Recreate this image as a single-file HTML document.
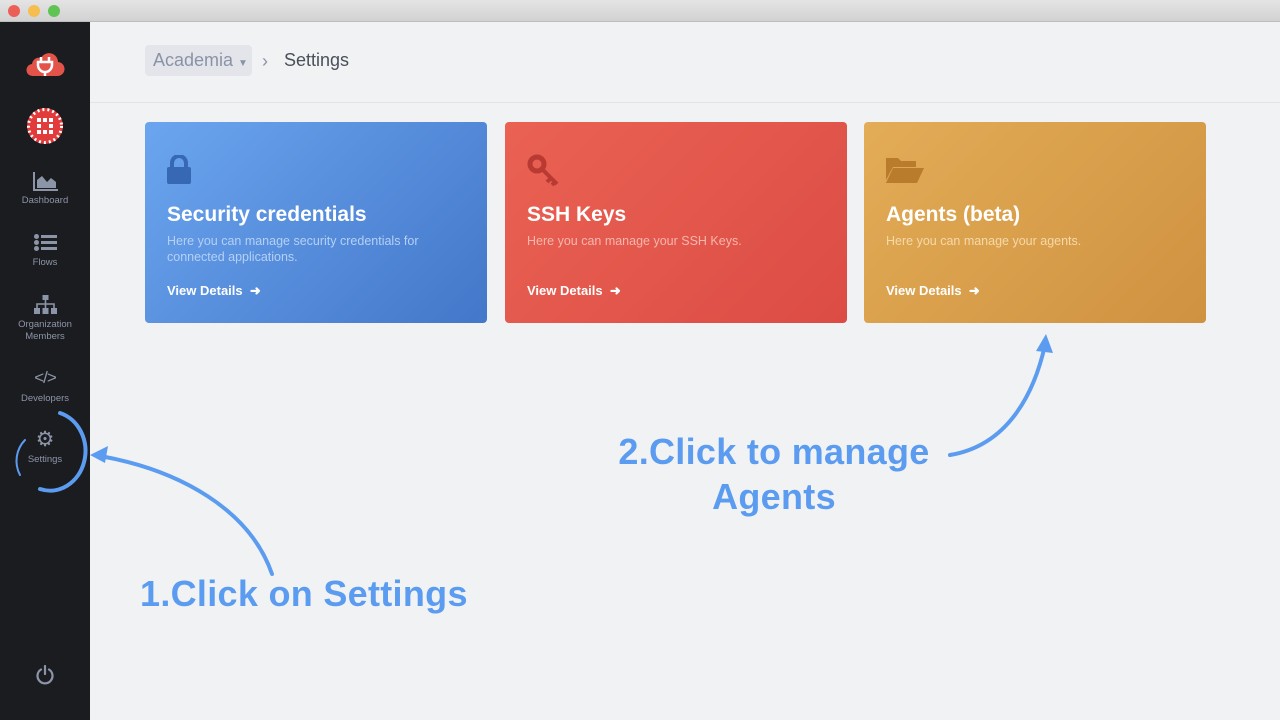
<!DOCTYPE html>
<html><head><meta charset="utf-8"><style>
*{margin:0;padding:0;box-sizing:border-box}
body{width:1280px;height:720px;overflow:hidden;background:#f1f2f4;font-family:"Liberation Sans",sans-serif;position:relative}
.tb{position:absolute;left:0;top:0;width:1280px;height:22px;background:linear-gradient(#e4e4e4,#d2d2d2);border-bottom:1px solid #bdbdbd}
.dot{position:absolute;top:5px;width:12px;height:12px;border-radius:50%}
.sb{position:absolute;left:0;top:22px;width:90px;height:698px;background:#1b1c1f}
.it{position:absolute;left:0;width:90px;text-align:center;color:#8c95a8;font-size:9.5px;line-height:12px}
.hdr{position:absolute;left:90px;top:22px;width:1190px;height:81px;border-bottom:1px solid #e1e3e6}
.crumb{position:absolute;left:145px;top:45px;width:107px;height:31px;background:#e3e5ea;border-radius:4px;color:#8a93a6;font-size:18px;line-height:31px;padding-left:8px}
.card{position:absolute;top:122px;width:342px;height:201px;border-radius:4px;color:#fff;padding:0 22px}
.ttl{position:absolute;left:22px;top:81px;font-size:21px;font-weight:bold}
.dsc{position:absolute;left:22px;top:111px;font-size:12.5px;line-height:16px;width:290px}
.vd{position:absolute;left:22px;top:161px;font-size:13px;font-weight:bold}
.ann{position:absolute;color:#5b9cf0;font-weight:bold;font-size:36px;text-align:center;line-height:45px;letter-spacing:0.3px}
</style></head><body>
<div class="tb"><div class="dot" style="left:8px;background:#ec5f57"></div><div class="dot" style="left:28px;background:#f5be4f"></div><div class="dot" style="left:48px;background:#5fc454"></div></div>
<div class="sb"></div>
<svg style="position:absolute;left:25px;top:48px" width="40" height="30" viewBox="0 0 40 30"><path d="M8 28h24a7 7 0 0 0 1-14 9 9 0 0 0-17-4 7 7 0 0 0-9 6 6 6 0 0 0 1 12z" fill="#e4534a"/><path d="M16 9v5M24 9v5M13 14h14v3a7 7 0 0 1-14 0zM20 23v5" stroke="#fff" stroke-width="2.5" fill="none"/></svg>
<svg style="position:absolute;left:27px;top:108px" width="36" height="36" viewBox="0 0 36 36"><circle cx="18" cy="18" r="18" fill="#e23b3b"/><circle cx="18" cy="18" r="16.5" fill="none" stroke="#fff" stroke-width="3" stroke-dasharray="2 3"/><g fill="#fff"><rect x="10" y="10" width="4" height="4"/><rect x="16" y="10" width="4" height="4"/><rect x="22" y="10" width="4" height="4"/><rect x="10" y="16" width="4" height="4"/><rect x="22" y="16" width="4" height="4"/><rect x="10" y="22" width="4" height="4"/><rect x="16" y="22" width="4" height="4"/><rect x="22" y="22" width="4" height="4"/></g></svg>
<svg style="position:absolute;left:33px;top:172px" width="25" height="19" viewBox="0 0 25 19"><path d="M1 0v18h24" stroke="#8c95a8" stroke-width="2" fill="none"/><path d="M4 16V8l5-4 5 6 4-4 5 4v6z" fill="#8c95a8"/></svg>
<div class="it" style="top:195px">Dashboard</div>
<svg style="position:absolute;left:34px;top:234px" width="23" height="17" viewBox="0 0 23 17"><g fill="#8c95a8"><circle cx="2.5" cy="2.5" r="2.5"/><circle cx="2.5" cy="8.5" r="2.5"/><circle cx="2.5" cy="14.5" r="2.5"/><rect x="7" y="1" width="16" height="3"/><rect x="7" y="7" width="16" height="3"/><rect x="7" y="13" width="16" height="3"/></g></svg>
<div class="it" style="top:257px">Flows</div>
<svg style="position:absolute;left:34px;top:295px" width="23" height="19" viewBox="0 0 23 19"><g fill="#8c95a8"><rect x="8.5" y="0" width="6" height="5"/><rect x="0" y="13" width="6" height="6"/><rect x="8.5" y="13" width="6" height="6"/><rect x="17" y="13" width="6" height="6"/></g><path d="M11.5 5v8M3 13V9h17v4" stroke="#8c95a8" stroke-width="1.6" fill="none"/></svg>
<div class="it" style="top:319px">Organization<br>Members</div>
<div class="it" style="top:368px;font-size:17px;line-height:20px;letter-spacing:-1px">&lt;/&gt;</div>
<div class="it" style="top:393px">Developers</div>
<div class="it" style="top:428px;font-size:21px;line-height:24px">⚙</div>
<div class="it" style="top:454px">Settings</div>
<svg style="position:absolute;left:35px;top:665px" width="20" height="20" viewBox="0 0 20 20"><path d="M6 4.5a7.5 7.5 0 1 0 8 0M10 1v8" stroke="#8c95a8" stroke-width="2.2" fill="none" stroke-linecap="round"/></svg>
<div class="hdr"></div>
<div class="crumb">Academia <span style="font-size:10px">▼</span></div>
<div style="position:absolute;left:262px;top:51px;color:#8a93a6;font-size:18px">›</div>
<div style="position:absolute;left:284px;top:50px;color:#4a4f5a;font-size:18px">Settings</div>
<div class="card" style="left:145px;background:linear-gradient(135deg,#6ba5ef,#4377c9)">
<svg style="position:absolute;left:22px;top:33px" width="24" height="30" viewBox="0 0 24 30"><path d="M5 13V8a7 7 0 0 1 14 0v5" stroke="#3668b4" stroke-width="4" fill="none"/><rect x="0" y="12" width="24" height="17" rx="2" fill="#3668b4"/></svg>
<div class="ttl">Security credentials</div><div class="dsc" style="color:#b4d0f5">Here you can manage security credentials for connected applications.</div><div class="vd">View Details &nbsp;➜</div></div>
<div class="card" style="left:505px;background:linear-gradient(135deg,#ea6253,#dc4c45)">
<svg style="position:absolute;left:22px;top:32px" width="34" height="34" viewBox="0 0 34 34"><circle cx="10" cy="10" r="7" stroke="#b93a33" stroke-width="5" fill="none"/><path d="M15 15l15 15M24 24l-4 4M28 28l-3 3" stroke="#b93a33" stroke-width="4" fill="none"/></svg>
<div class="ttl">SSH Keys</div><div class="dsc" style="color:#f6b6ae">Here you can manage your SSH Keys.</div><div class="vd">View Details &nbsp;➜</div></div>
<div class="card" style="left:864px;background:linear-gradient(135deg,#e3ac57,#cf9240)">
<svg style="position:absolute;left:22px;top:34px" width="38" height="28" viewBox="0 0 38 28"><path d="M0 2h12l3 3h15v6H7L0 24z" fill="#b97b2c"/><path d="M7 12h31l-7 15H0z" fill="#b97b2c"/></svg>
<div class="ttl">Agents (beta)</div><div class="dsc" style="color:#f5d9a8">Here you can manage your agents.</div><div class="vd">View Details &nbsp;➜</div></div>
<svg style="position:absolute;left:0;top:0" width="1280" height="720">
<g stroke="#5b9cf0" stroke-width="4" fill="none" stroke-linecap="round">
<path d="M60 413a34 38 0 1 1-20 76"/><path d="M25 440a30 30 0 0 0-5 35" stroke-width="2"/>
<path d="M272 574C250 510 180 470 100 456"/>
<path d="M950 455C1010 445 1035 390 1045 345"/>
</g>
<g fill="#5b9cf0"><path d="M90 455l18-9-3 17z"/><path d="M1046 334l-10 17 17 2z"/></g>
</svg>
<div class="ann" style="left:604px;top:429px;width:340px">2.Click to manage<br>Agents</div>
<div class="ann" style="left:140px;top:571px">1.Click on Settings</div>
</body></html>
